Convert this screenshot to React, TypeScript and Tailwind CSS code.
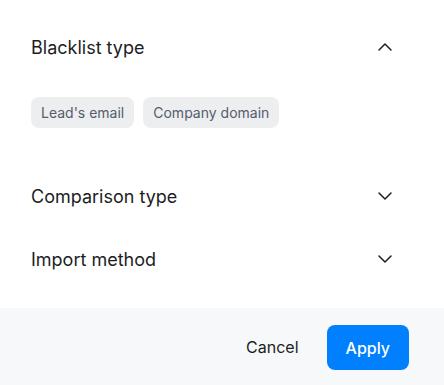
import { ChevronDown, ChevronUp } from 'lucide-react';

const BLACKLIST_TYPES = ["Lead's email", 'Company domain'];

function SectionHeader({ title, open }: { title: string; open?: boolean }) {
  return (
    <div className="flex h-12 items-center justify-between">
      <h3 className="text-[18px] font-normal text-[#1b1e24]">{title}</h3>
      <button className="flex h-6 w-6 items-center justify-center text-[#1b1e24]">
        {open ? <ChevronUp size={24} strokeWidth={1.5} /> : <ChevronDown size={24} strokeWidth={1.5} />}
      </button>
    </div>
  );
}

export default function App() {
  return (
    <div
      className="flex h-[385px] w-[444px] flex-col bg-white"
      style={{ fontFamily: 'Inter, "Noto Sans", sans-serif' }}
    >
      <div className="flex-1 pl-[31px] pr-[47px] pt-[23px]">
        <SectionHeader title="Blacklist type" open />
        <div className="mt-[26px] flex gap-[9px]">
          {BLACKLIST_TYPES.map((t) => (
            <button
              key={t}
              className="h-[31px] rounded-lg bg-[#eceef0] px-[10px] text-[14px] text-[#555d6b]"
            >
              {t}
            </button>
          ))}
        </div>
        <div className="mt-[44px]">
          <SectionHeader title="Comparison type" />
        </div>
        <div className="mt-[15px]">
          <SectionHeader title="Import method" />
        </div>
      </div>
      <div className="flex h-[77px] items-center justify-end gap-3 bg-[#f7f8fa] pr-[35px]">
        <button className="px-4 py-2 text-[16px] text-[#1b1e24]">Cancel</button>
        <button className="mt-[2px] h-[45px] rounded-lg bg-[#0080ff] px-[19px] text-[16px] font-medium text-white">
          Apply
        </button>
      </div>
    </div>
  );
}
